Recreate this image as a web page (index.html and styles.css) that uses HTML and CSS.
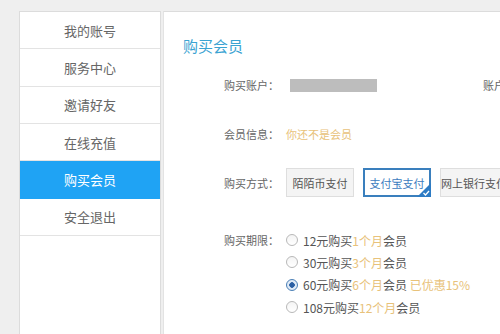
FILE: index.html
```html
<!DOCTYPE html>
<html lang="zh-CN">
<head>
<meta charset="utf-8">
<link rel="stylesheet" href="styles.css">
</head>
<body>
<div class="page">
  <nav class="sidebar">
    <div class="nav-item">我的账号</div>
    <div class="nav-item">服务中心</div>
    <div class="nav-item">邀请好友</div>
    <div class="nav-item">在线充值</div>
    <div class="nav-item active">购买会员</div>
    <div class="nav-item">安全退出</div>
  </nav>
  <main class="main">
    <h1 class="title">购买会员</h1>
    <div class="row row-account">
      <span class="label">购买账户：</span>
      <span class="masked"></span>
      <span class="extra">账户</span>
    </div>
    <div class="row row-info">
      <span class="label">会员信息：</span>
      <span class="gold">你还不是会员</span>
    </div>
    <div class="row row-method">
      <span class="label">购买方式：</span>
      <div class="methods">
        <span class="method">陌陌币支付</span>
        <span class="method selected">支付宝支付<svg class="tick" width="14" height="14" viewBox="0 0 14 14"><path d="M14 0 L14 14 L0 14 Z" fill="#2c7bc4"/><path d="M6.5 10 L8.5 12 L12 8" stroke="#fff" stroke-width="1.3" fill="none"/></svg></span>
        <span class="method">网上银行支付</span>
      </div>
    </div>
    <div class="row row-period">
      <span class="label">购买期限：</span>
      <div class="options">
        <div class="option"><span class="radio"></span><span>12元购买<em class="gold">1个月</em>会员</span></div>
        <div class="option"><span class="radio"></span><span>30元购买<em class="gold">3个月</em>会员</span></div>
        <div class="option"><span class="radio checked"></span><span>60元购买<em class="gold">6个月</em>会员 <em class="gold">已优惠15%</em></span></div>
        <div class="option"><span class="radio"></span><span>108元购买<em class="gold">12个月</em>会员</span></div>
      </div>
    </div>
  </main>
</div>
</body>
</html>
```

FILE: styles.css
```css
html, body {
  margin: 0;
  padding: 0;
  height: 100%;
  overflow: hidden;
}
body {
  background: #efefef;
  font-family: "Noto Sans CJK SC", "Noto Sans", sans-serif;
  color: #555;
}
.page {
  display: flex;
  gap: 2px;
  padding: 11px 0 0 19px;
  height: 100%;
  box-sizing: border-box;
}
.sidebar {
  width: 142px;
  flex: none;
  background: #fff;
  border: 1px solid #dcdcdc;
  border-bottom: none;
  box-sizing: border-box;
}
.nav-item {
  height: 37.33px;
  box-sizing: border-box;
  border-bottom: 1px solid #e3e3e3;
  display: flex;
  align-items: center;
  justify-content: center;
  font-size: 13px;
  color: #666;
}
.nav-item.active {
  background: #1fa3f4;
  color: #fff;
  border-bottom-color: #1fa3f4;
}
.main {
  flex: 1;
  background: #fff;
  border-left: 1px solid #e3e3e3;
  border-top: 1px solid #dcdcdc;
  padding: 23px 0 0 19px;
  overflow: hidden;
  white-space: nowrap;
}
.title {
  margin: 0;
  font-size: 15px;
  font-weight: normal;
  color: #3aa3d2;
  line-height: 22px;
}
.row {
  display: flex;
  align-items: center;
  padding-left: 41px;
  font-size: 11px;
}
.label {
  width: 62px;
  flex: none;
  color: #666;
}
.row-account {
  margin-top: 21px;
  height: 14px;
}
.masked {
  width: 87px;
  height: 13px;
  background: #bdbdbd;
  margin-left: 4px;
  flex: none;
}
.extra {
  margin-left: 106px;
  color: #666;
}
.row-info {
  margin-top: 34px;
}
.gold {
  color: #e8c27a;
  font-style: normal;
}
.row-method {
  margin-top: 26px;
}
.methods {
  display: flex;
  gap: 9px;
}
.method {
  position: relative;
  width: 68px;
  height: 29px;
  box-sizing: border-box;
  border: 1px solid #dedede;
  background: #f4f4f4;
  display: flex;
  align-items: center;
  justify-content: center;
  color: #555;
}
.method.selected {
  background: #fff;
  border: 2px solid #3a7fbd;
  color: #3d7cc0;
}
.tick {
  position: absolute;
  right: -2px;
  bottom: -2px;
}
.row-period {
  margin-top: 36px;
  align-items: flex-start;
}
.row-period .label {
  line-height: 22px;
  margin-top: -4px;
}
.options {
  display: flex;
  flex-direction: column;
  margin-top: -4px;
}
.option {
  height: 22.3px;
  display: flex;
  align-items: center;
  gap: 5px;
  font-size: 12px;
  color: #555;
}
.radio {
  width: 10px;
  height: 10px;
  border: 1px solid #b8b8b8;
  border-radius: 50%;
  background: linear-gradient(#f4f4f4, #fff);
  flex: none;
  position: relative;
}
.radio.checked {
  border-color: #4a7fb6;
  background: radial-gradient(circle, #2a5fa4 0 2.5px, #dfeaf6 3px);
}
```
